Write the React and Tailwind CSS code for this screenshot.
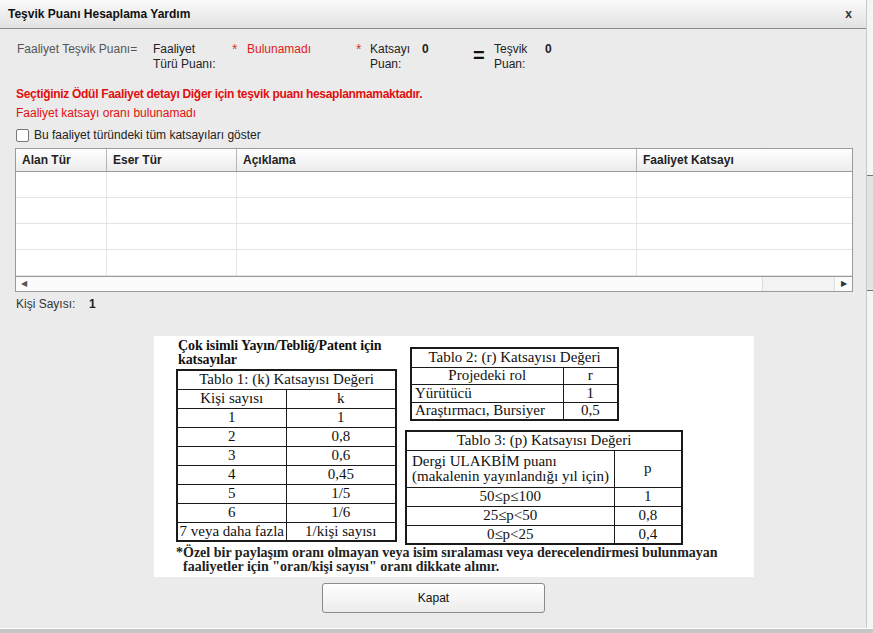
import React from "react";

const sans = { fontFamily: '"Liberation Sans", Arial, sans-serif' };

function ScanTables() {
  const t1 = [
    ["1", "1"],
    ["2", "0,8"],
    ["3", "0,6"],
    ["4", "0,45"],
    ["5", "1/5"],
    ["6", "1/6"],
    ["7 veya daha fazla", "1/kişi sayısı"],
  ];
  const cell = "border border-[#1a1a1a] p-0 leading-none";

  return (
    <div
      className="w-[600px] h-[241px] bg-white pl-[22px] pt-[3px] text-[#111] font-['Liberation_Serif',_serif]"
    >
      <div className="flex">
        <div className="w-[229px] flex flex-col">
          <div className="font-bold text-[14px] leading-[14px] h-[30px] tracking-[-0.1px] pl-[2px]">
            Çok isimli Yayın/Tebliğ/Patent için
            <br />
            katsayılar
          </div>
          <table className="border-collapse w-[221px] text-[15px] border-2 border-[#1a1a1a]">
            <tbody>
              <tr className="h-[19px]">
                <td colSpan={2} className={`${cell} text-center`}>
                  Tablo 1: (k) Katsayısı Değeri
                </td>
              </tr>
              <tr className="h-[19px]">
                <td className={`${cell} text-center w-[109px]`}>Kişi sayısı</td>
                <td className={`${cell} text-center`}>k</td>
              </tr>
              {t1.map(([a, b]) => (
                <tr key={a} className="h-[19px]">
                  <td className={`${cell} text-center`}>{a}</td>
                  <td className={`${cell} text-center`}>{b}</td>
                </tr>
              ))}
            </tbody>
          </table>
        </div>

        <div className="flex flex-col">
          <table className="ml-[5px] mt-[8px] border-collapse w-[209px] text-[15px] border-2 border-[#1a1a1a]">
            <tbody>
              <tr className="h-[19px]">
                <td colSpan={2} className={`${cell} text-center`}>
                  Tablo 2: (r) Katsayısı Değeri
                </td>
              </tr>
              <tr className="h-[17px]">
                <td className={`${cell} text-center w-[152px]`}>Projedeki rol</td>
                <td className={`${cell} text-center`}>r</td>
              </tr>
              <tr className="h-[18px]">
                <td className={`${cell} text-left pl-[3px]`}>Yürütücü</td>
                <td className={`${cell} text-center`}>1</td>
              </tr>
              <tr className="h-[18px]">
                <td className={`${cell} text-left pl-[3px]`}>Araştırmacı, Bursiyer</td>
                <td className={`${cell} text-center`}>0,5</td>
              </tr>
            </tbody>
          </table>

          <table className="mt-[9px] border-collapse w-[278px] text-[15px] border-2 border-[#1a1a1a]">
            <tbody>
              <tr className="h-[19px]">
                <td colSpan={2} className={`${cell} text-center`}>
                  Tablo 3: (p) Katsayısı Değeri
                </td>
              </tr>
              <tr className="h-[37px]">
                <td className={`${cell} text-left pl-[5px] w-[208px] leading-[16px]`}>
                  Dergi ULAKBİM puanı
                  <br />
                  (makalenin yayınlandığı yıl için)
                </td>
                <td className={`${cell} text-center`}>p</td>
              </tr>
              <tr className="h-[19px]">
                <td className={`${cell} text-center`}>50≤p≤100</td>
                <td className={`${cell} text-center`}>1</td>
              </tr>
              <tr className="h-[19px]">
                <td className={`${cell} text-center`}>25≤p&lt;50</td>
                <td className={`${cell} text-center`}>0,8</td>
              </tr>
              <tr className="h-[19px]">
                <td className={`${cell} text-center`}>0≤p&lt;25</td>
                <td className={`${cell} text-center`}>0,4</td>
              </tr>
            </tbody>
          </table>
        </div>
      </div>

      <div className="font-bold text-[14px] leading-[14px] mt-[1px] text-[#222]">
        *Özel bir paylaşım oranı olmayan veya isim sıralaması veya derecelendirmesi bulunmayan
        <br />
        <span className="pl-[7px]">faaliyetler için "oran/kişi sayısı" oranı dikkate alınır.</span>
      </div>
    </div>
  );
}

function DataTable() {
  const cols = [
    { name: "Alan Tür", w: "w-[91px]" },
    { name: "Eser Tür", w: "w-[130px]" },
    { name: "Açıklama", w: "w-[400px]" },
    { name: "Faaliyet Katsayı", w: "flex-1" },
  ];
  return (
    <div className="w-[838px] border border-[#9a9a9a] bg-white">
      <div className="flex h-[23px] bg-gradient-to-b from-white to-[#ececec] border-b border-[#9a9a9a]">
        {cols.map((c, i) => (
          <div
            key={c.name}
            className={`${c.w} ${i < 3 ? "border-r border-[#b5b5b5]" : ""} pl-[6px] flex items-center font-bold text-[12px] text-[#222]`}
          >
            {c.name}
          </div>
        ))}
      </div>
      {[0, 1, 2, 3].map((r) => (
        <div key={r} className="flex h-[26px] border-b border-[#e3e3e3] last:border-b-0">
          {cols.map((c, i) => (
            <div key={c.name} className={`${c.w} ${i < 3 ? "border-r border-[#e6e6e6]" : ""}`} />
          ))}
        </div>
      ))}
      <div className="flex h-[15px] border-t border-[#9a9a9a] bg-[#fbfbfb]">
        <div className="w-[15px] flex items-center justify-center text-[8px] text-[#555]">◀</div>
        <div className="flex-1" />
        <div className="w-[73px] border-l border-r border-[#dcdcdc] bg-[#f3f3f3]" />
        <div className="w-[17px] flex items-center justify-center text-[8px] text-[#333]">▶</div>
      </div>
    </div>
  );
}

export default function App() {
  return (
    <div className="w-[873px] h-[633px] overflow-hidden bg-[#f5f5f5] flex flex-col" style={sans}>
      <div className="flex h-[628px]">
        <div className="w-[867px] h-full bg-[#ebebeb] border-r border-[#c9c9c9] flex flex-col">
          <div className="h-[29px] shrink-0 bg-gradient-to-b from-[#fafafa] to-[#e2e2e2] border-b border-[#8c8c8c] flex items-center justify-between pl-[8px] pr-[14px]">
            <span className="font-bold text-[12px] text-[#111]">Teşvik Puanı Hesaplama Yardım</span>
            <span className="font-bold text-[12px] text-[#333]">x</span>
          </div>

          <div className="flex flex-col px-[15px] text-[12px]">
            <div className="flex pt-[13px] leading-[15px] h-[57px]">
              <div className="w-[138px] pl-[2px] text-[#555]">Faaliyet Teşvik Puanı=</div>
              <div className="w-[79px] text-[#222]">
                Faaliyet
                <br />
                Türü Puanı:
              </div>
              <div className="w-[15px] text-[#d43a3a] text-[14px]">*</div>
              <div className="w-[109px] text-[#e01b1b]">Bulunamadı</div>
              <div className="w-[14px] text-[#d43a3a] text-[14px]">*</div>
              <div className="w-[52px] text-[#222]">
                Katsayı
                <br />
                Puan:
              </div>
              <div className="w-[51px] font-bold text-[#222]">0</div>
              <div className="w-[21px] font-bold text-[20px] leading-[26px] text-[#111]">=</div>
              <div className="w-[51px] text-[#222]">
                Teşvik
                <br />
                Puan:
              </div>
              <div className="font-bold text-[#222]">0</div>
            </div>

            <div className="pl-[1px] font-bold text-[#e01010] leading-[16px] tracking-[-0.3px]">
              Seçtiğiniz Ödül Faaliyet detayı Diğer için teşvik puanı hesaplanmamaktadır.
            </div>
            <div className="pl-[1px] text-[#e01010] leading-[16px] mt-[3px]">
              Faaliyet katsayı oranı bulunamadı
            </div>

            <label className="flex items-center gap-[5px] mt-[6px] h-[16px] pl-[1px]">
              <span className="w-[13px] h-[13px] border border-[#777] bg-white rounded-[2px]" />
              <span className="text-[#222]">Bu faaliyet türündeki tüm katsayıları göster</span>
            </label>

            <div className="mt-[5px]">
              <DataTable />
            </div>

            <div className="flex mt-[5px] leading-[14px] pl-[1px]">
              <span className="w-[73px] text-[#333]">Kişi Sayısı:</span>
              <span className="font-bold text-[#222]">1</span>
            </div>

            <div className="mt-[25px] ml-[139px]">
              <ScanTables />
            </div>

            <button className="mt-[6px] ml-[307px] w-[223px] h-[30px] border border-[#8a8a8a] rounded-[3px] bg-gradient-to-b from-white to-[#ececec] text-[12px] text-[#111]">
              Kapat
            </button>
          </div>
        </div>
        <div className="flex-1 flex flex-col pt-[175px]">
          <div className="h-[116px] bg-[#e4e4e4] border-t border-b border-[#777]" />
        </div>
      </div>
      <div className="h-[1px] bg-white" />
      <div className="flex-1 bg-[#c6c6c6]" />
    </div>
  );
}
